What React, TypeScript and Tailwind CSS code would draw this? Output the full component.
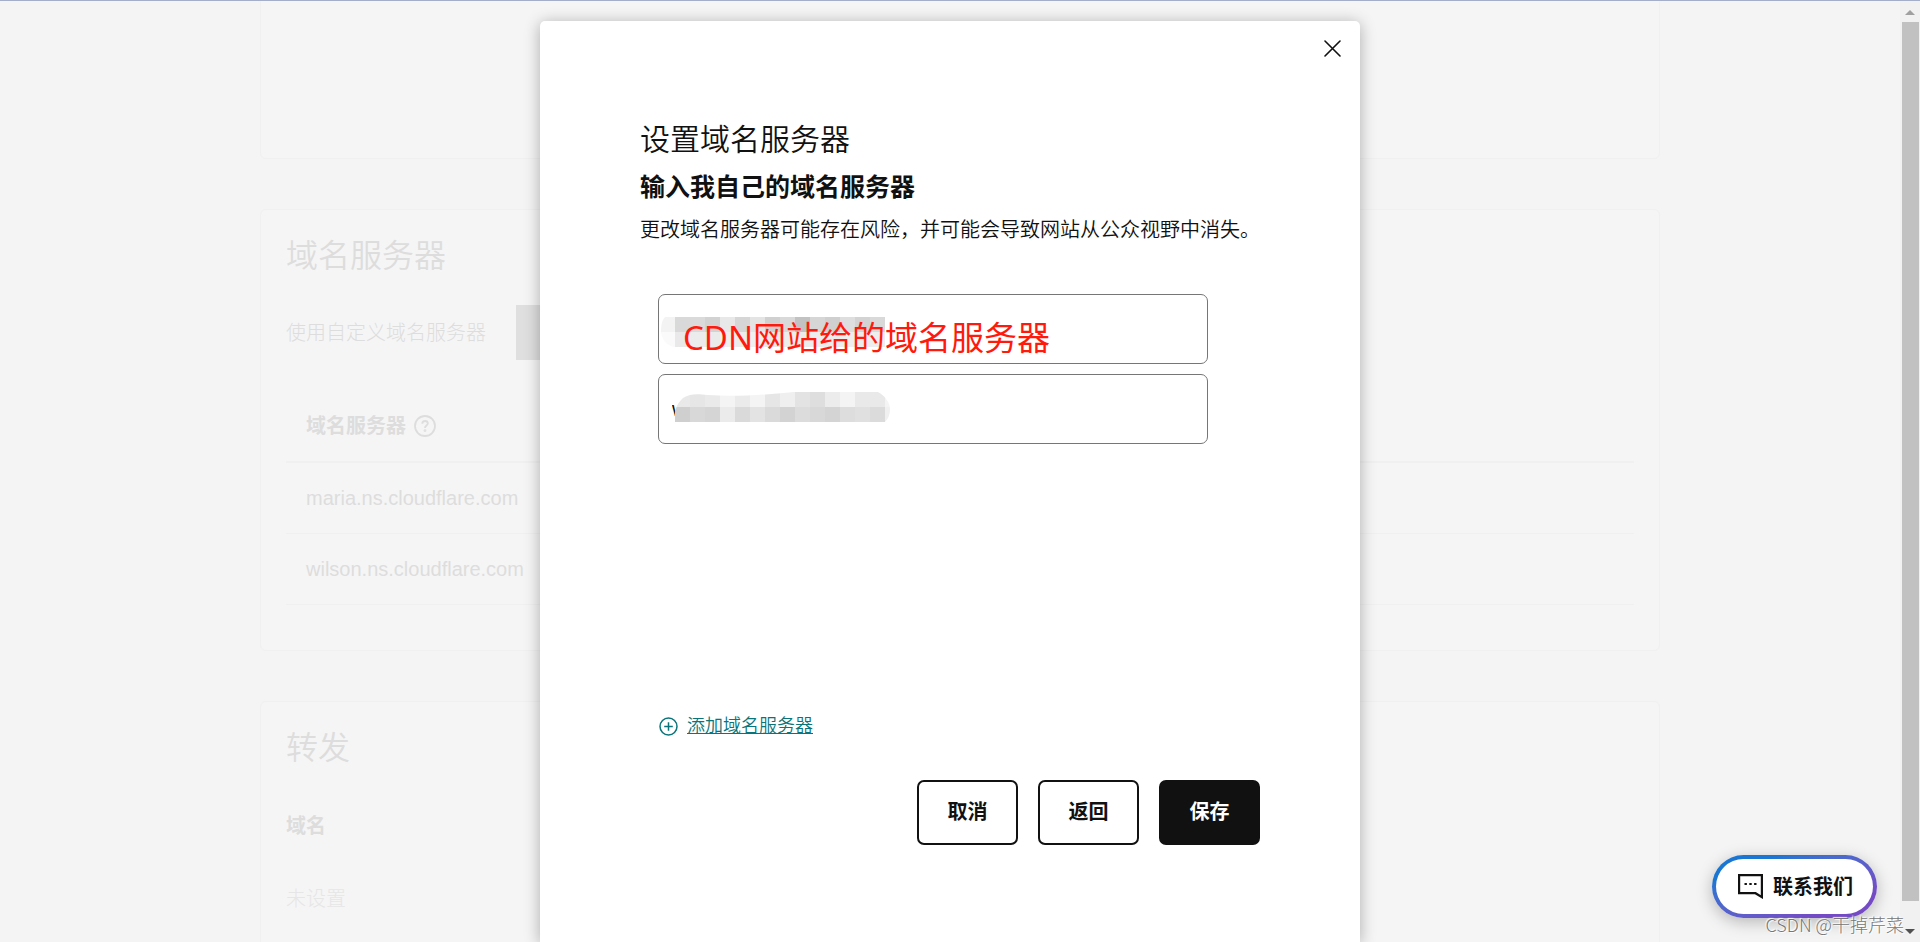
import React, { useState } from 'react'

const servers = ['maria.ns.cloudflare.com', 'wilson.ns.cloudflare.com']

const redactedTop = [
  ['#d9d9d9', '#dadada', '#d2d2d2', '#e8e8e8', '#d6d6d6', '#e4e4e4', '#d0d0d0', '#d9d9d9', '#c2c2c2', '#d6d6d6', '#cfcfcf', '#dedede', '#d3d3d3', '#d9d9d9'],
  ['#e9e9e9', '#ececec', '#eaeaea', '#f0f0f0', '#ececec', '#efefef', '#e9e9e9', '#ededed', '#ebebeb', '#ededed', '#ebebeb', '#eeeeee', '#ececec', '#eeeeee'],
]

const redactedBottom = [
  ['#e9e9e9', '#e6e6e6', '#eaeaea', '#f4f4f4', '#ebebeb', '#f4f4f4', '#e6e6e6', '#efefef', '#e3e3e3', '#dedede', '#ececec', '#f4f4f4', '#e9e9e9', '#e9e9e9', '#f4f4f4'],
  ['#cfcfcf', '#d8d8d8', '#d5d5d5', '#ebebeb', '#dadada', '#e3e3e3', '#dadada', '#d3d3d3', '#dcdcdc', '#d8d8d8', '#d4d4d4', '#dddddd', '#e0e0e0', '#dbdbdb', '#f0f0f0'],
]

function Blocks({ rows, x }: { rows: string[][]; x: number }) {
  return (
    <>
      {rows.map((row, r) =>
        row.map((color, c) => (
          <rect key={`${r}-${c}`} x={x + c * 15} y={r * 15} width="15" height="15" fill={color} />
        ))
      )}
    </>
  )
}

function Card({ className, children }: { className?: string; children?: React.ReactNode }) {
  return (
    <section className={`rounded-md border border-[#f0f0f0] bg-[#f5f5f5] px-[25px] ${className ?? ''}`}>
      {children}
    </section>
  )
}

function Background() {
  return (
    <main className="mx-auto w-full max-w-[1400px] space-y-[50px] text-[#dddddd]">
      <Card className="-mt-2 h-[167px]" />
      <Card className="h-[442px] pt-6">
        <h2 className="text-[32px] leading-[44px] font-[350]">域名服务器</h2>
        <div className="mt-[27px] flex items-center gap-[30px]">
          <p className="text-xl font-light">使用自定义域名服务器</p>
          <button type="button" className="h-[55px] bg-[#dfdfdf] px-6 text-xl font-bold text-[#f5f5f5]">
            更改域名服务器
          </button>
        </div>
        <table className="mt-[30px] w-full text-left text-xl">
          <thead>
            <tr className="h-[72px] border-b-2 border-[#f0f0f0]">
              <th className="px-5 font-bold">
                <span className="flex items-center gap-2">
                  域名服务器
                  <svg width="22" height="22" viewBox="0 0 22 22" fill="none" stroke="currentColor" strokeWidth="1.8">
                    <circle cx="11" cy="11" r="10" />
                    <path d="M8.3 8.8c0-1.7 1.1-2.8 2.8-2.8s2.7 1 2.7 2.5c0 2-2.8 2-2.8 4.4" />
                    <circle cx="11" cy="15.6" r=".5" />
                  </svg>
                </span>
              </th>
            </tr>
          </thead>
          <tbody>
            {servers.map((server) => (
              <tr key={server} className="h-[71px] border-b border-[#f0f0f0]">
                <td className="px-5">{server}</td>
              </tr>
            ))}
          </tbody>
        </table>
      </Card>
      <Card className="h-[442px] pt-6">
        <h2 className="text-[32px] leading-[44px] font-[350]">转发</h2>
        <h3 className="mt-[42px] text-xl font-bold">域名</h3>
        <p className="mt-[45px] text-xl font-light text-[#e6e6e6]">未设置</p>
      </Card>
    </main>
  )
}

function ServerField({ label, children, ...rest }: { label: string; children: React.ReactNode } & React.InputHTMLAttributes<HTMLInputElement>) {
  return (
    <div className="relative">
      <input
        {...rest}
        aria-label={label}
        className="block h-[70px] w-full rounded-[7px] border border-[#767676] bg-white px-[13px] text-xl text-[#111] outline-none"
        type="text"
      />
      {children}
    </div>
  )
}

function Dialog({ onClose }: { onClose: () => void }) {
  const outline = 'rounded-[7px] border-2 border-[#111] min-w-[101px] px-6 h-[65px] text-xl font-bold'

  return (
    <div className="absolute inset-0 flex justify-center pt-[21px] pr-5">
      <div
        role="dialog"
        aria-labelledby="dialog-title"
        className="relative w-full max-w-[820px] rounded-t-[5px] bg-white px-[100px] pt-[97px] text-[#111] shadow-[0_2px_16px_rgba(0,0,0,0.3)]"
      >
        <button type="button" aria-label="关闭" className="absolute top-[19px] right-[19px]" onClick={onClose}>
          <svg width="17" height="17" viewBox="0 0 17 17" stroke="currentColor" strokeWidth="1.6" strokeLinecap="round">
            <path d="M1 1l15 15M16 1L1 16" />
          </svg>
        </button>

        <h1 id="dialog-title" className="text-[30px] leading-[44px] font-[350]">
          设置域名服务器
        </h1>
        <h2 className="mt-1 text-[25px] leading-[42px] font-bold">输入我自己的域名服务器</h2>
        <p className="mt-2 text-xl font-[350] whitespace-nowrap">
          更改域名服务器可能存在风险，并可能会导致网站从公众视野中消失。
        </p>

        <form className="mt-[50px]" onSubmit={(event) => event.preventDefault()}>
          <div className="flex min-h-[420px] flex-col gap-[10px] pr-[52px] pl-[18px]">
            <ServerField label="域名服务器 1">
              <svg className="absolute top-[23px] left-[3px]" width="225" height="30" viewBox="0 0 225 30">
                <path d="M4 0h10v15H0C0 8 1 3 4 0z" fill="#f3f3f3" />
                <path d="M0 15h14v15C6 29 1 23 0 15z" fill="#fafafa" />
                <Blocks rows={redactedTop} x={14} />
              </svg>
              <span className="absolute top-5 left-[25px] font-['Noto_Sans','Noto_Sans_CJK_SC',sans-serif] text-[33px] leading-[48px] whitespace-nowrap text-[#ff1a0e]">
                CDN网站给的域名服务器
              </span>
            </ServerField>
            <ServerField label="域名服务器 2" defaultValue="w">
              <svg className="absolute top-[18px] left-[16px]" width="216" height="30" viewBox="0 0 216 30">
                <clipPath id="smudge">
                  <path d="M1 30C0 22 1 13 9 6 17 1 24 2 34 3 60 5 90 3 120 0h84c8 4 12 12 12 17 0 6-2 10-5 13z" />
                </clipPath>
                <g clipPath="url(#smudge)">
                  <Blocks rows={redactedBottom} x={1} />
                </g>
              </svg>
            </ServerField>
          </div>
          <a href="#add" className="ml-[19px] inline-flex h-6 items-center gap-[9px] text-lg leading-6 font-[350] text-[#09757a]">
            <svg width="19" height="19" viewBox="0 0 19 19" fill="none" stroke="currentColor" strokeWidth="1.5">
              <circle cx="9.5" cy="9.5" r="8.5" />
              <path d="M9.5 5.2v8.6M5.2 9.5h8.6" />
            </svg>
            <span className="underline">添加域名服务器</span>
          </a>
          <div className="mt-[37px] flex justify-end gap-5">
            <button type="button" className={outline} onClick={onClose}>
              取消
            </button>
            <button type="button" className={outline}>
              返回
            </button>
            <button type="submit" className={`${outline} bg-[#111] text-white`}>
              保存
            </button>
          </div>
        </form>
      </div>
    </div>
  )
}

function Scrollbar() {
  return (
    <div className="absolute inset-y-0 right-0 flex w-5 flex-col items-center bg-[#f1f1f1] pt-[10px] pb-2">
      <svg width="10" height="5" viewBox="0 0 10 5" fill="#a0a0a0">
        <path d="M5 0l5 5H0z" />
      </svg>
      <div className="mt-[7px] mb-7 w-[17px] flex-1 bg-[#c1c1c1]" />
      <svg width="10" height="5" viewBox="0 0 10 5" fill="#505050">
        <path d="M0 0h10L5 5z" />
      </svg>
    </div>
  )
}

export default function App() {
  const [open, setOpen] = useState<boolean>(true)

  return (
    <div className="relative h-screen overflow-hidden bg-[#f4f4f4] font-['Liberation_Sans','Noto_Sans_CJK_SC',sans-serif]">
      <Background />
      {open ? <Dialog onClose={() => setOpen(false)} /> : null}
      <Scrollbar />

      <button
        type="button"
        className="absolute right-[43px] bottom-6 rounded-full bg-linear-to-br from-[#1976d2] from-20% to-[#744bc4] to-80% p-1 shadow-[0_4px_16px_rgba(0,0,0,0.25)]"
      >
        <span className="flex h-[55px] items-center gap-[10px] rounded-full bg-white pr-5 pl-[22px] text-xl font-bold text-[#111]">
          <svg width="25" height="25" viewBox="0 0 25 25" fill="none" stroke="currentColor" strokeWidth="2.2">
            <path d="M1.1 1.1h22.8v22l-6.4-3.9H1.1z" />
            <path d="M6.5 10h2.4M11.3 10h2.4M16.1 10h2.4" />
          </svg>
          联系我们
        </span>
      </button>
      <span className="absolute right-4 bottom-[6px] font-['Noto_Sans_CJK_SC',sans-serif] text-lg leading-6 font-light text-[#777] [text-shadow:1px_1px_1px_white,-1px_-1px_1px_white]">
        CSDN @干掉芹菜
      </span>
      <div className="absolute inset-x-0 top-0 h-px bg-[#a5aec8]" />
    </div>
  )
}
